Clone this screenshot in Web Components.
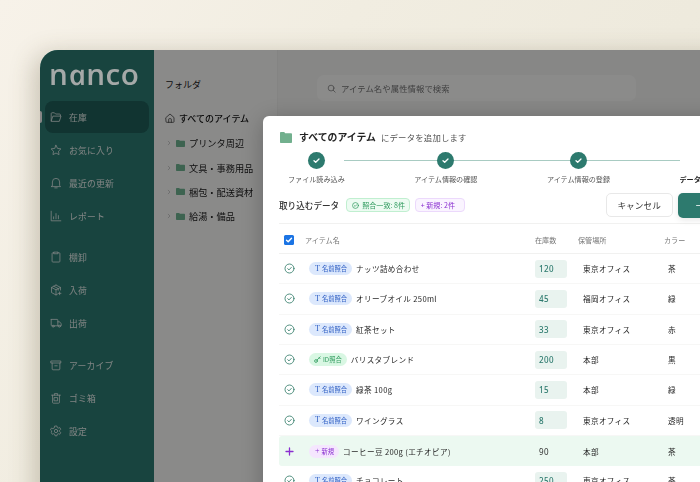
<!DOCTYPE html>
<html lang="ja"><head><meta charset="utf-8"><title>nanco</title>
<style>
html,body{margin:0;height:482px;overflow:hidden}
body{width:700px;background:linear-gradient(125deg,#f7f2e9 0,#f1ede1 35%,#ebe7d9 100%);font-family:"Noto Sans CJK JP","Noto Sans",sans-serif;color:#2b2b2b}
</style></head><body>
<app-window>
  <side-nav slot="nav"></side-nav>
  <folder-panel slot="folders"></folder-panel>
  <search-pane slot="main"></search-pane>
  <import-modal slot="modal"></import-modal>
</app-window>
<script>
const ICONS={
folder:'<path d="M1.500 12V3.200c0-.6.400-1 1-1h3l1.500 1.600h5c.6 0 1 .4 1 1V6M1.500 12.500 3.600 6.400h10.200l-2 6.100z"/>',
star:'<path d="M7.500 1.600l1.900 3.900 4.200.6-3 3 .7 4.200-3.800-2-3.800 2 .7-4.200-3-3 4.200-.6z"/>',
bell:'<path d="M3 10.500V6.200a4.500 4.500 0 019 0v4.300l1.200 1.500H1.800zM6 13.600h3"/>',
chart:'<path d="M1.500 1.500v12h12M4.500 11V8.500M7.500 11V4.500M10.500 11V7"/>',
clip:'<path d="M5 2.200H3.600c-.6 0-1 .4-1 1v9.600c0 .6.400 1 1 1h7.800c.6 0 1-.4 1-1V3.200c0-.6-.4-1-1-1H10M5 1.400h5v2H5z"/>',
box:'<path d="M7.500 1.300l5.600 3v3.200M7.500 1.300 1.900 4.300v6.400l5.600 3 1.800-1M1.900 4.300l5.600 3 5.600-3M7.500 7.300v6.400M4.700 2.800l5.600 3v2M12 10v3.400M10.300 11.700h3.400"/>',
truck:'<path d="M1.500 3h7.500c.5 0 .8.3.8.800V11H5M3 11H2.300c-.5 0-.8-.3-.8-.8V3M9.800 6h2.200l2 2.500V11h-1M10.500 11H9.800"/><circle cx="4" cy="11.500" r="1.200"/><circle cx="11.700" cy="11.500" r="1.200"/>',
archive:'<path d="M1.500 2.500h12v2.500h-12zM2.700 5v7.500c0 .6.400 1 1 1h7.600c.6 0 1-.4 1-1V5M6 8.500h3"/>',
trash:'<path d="M2 4h11M5.500 4V2h4v2M3.200 4v9c0 .6.400 1 1 1h6.600c.6 0 1-.4 1-1V4M5.500 7h4v4h-4z"/>',
gear:'<circle cx="7.500" cy="7.500" r="2.100"/><path d="M6.300 1.300h2.400l.4 1.900 1.300.7 1.800-.7 1.200 2.100-1.400 1.300v1.600l1.400 1.300-1.200 2.100-1.800-.7-1.300.7-.4 1.900H6.300l-.4-1.900-1.300-.7-1.800.7-1.200-2.100L2 8.900V7.300L.6 6l1.200-2.100 1.800.7 1.300-.7z"/>',
home:'<path d="M1.500 6.800 7.500 1.500l6 5.300V13c0 .6-.4 1-1 1h-10c-.6 0-1-.4-1-1zM5.500 14V9.500c0-.6.400-1 1-1h2c.6 0 1 .4 1 1V14"/>',
search:'<circle cx="6.800" cy="6.800" r="4.800"/><path d="M10.400 10.400l3.200 3.200"/>',
chev:'<path d="M5.500 3l4.500 4.500L5.500 12"/>'
};
const ico=(n,s=15,c='currentColor',w=1.1)=>`<svg width="${s}" height="${s}" viewBox="0 0 15 15" fill="none" stroke="${c}" stroke-width="${w}" stroke-linecap="round" stroke-linejoin="round" style="display:block;flex:none">${ICONS[n]}</svg>`;
const FOLDER=(s,h,c)=>`<svg width="${s}" height="${h}" viewBox="0 0 12 10" preserveAspectRatio="none" style="display:block;flex:none"><path fill="${c}" d="M0 1c0-.5.4-1 1-1h3.200l1 1.200H11c.6 0 1 .4 1 1V9c0 .6-.4 1-1 1H1c-.6 0-1-.4-1-1z"/></svg>`;
function def(name,css,html){
  customElements.define(name,class extends HTMLElement{
    connectedCallback(){
      if(this.shadowRoot)return;
      const r=this.attachShadow({mode:'open'});
      r.innerHTML=`<style>${css}</style>`+(typeof html==='function'?html(this):html);
    }
  });
}
def('app-window',`
:host{display:block;position:absolute;left:40px;top:50px;width:760px;height:560px;border-radius:18px 0 0 0;overflow:hidden;background:#f8f8f7;box-shadow:-6px 4px 24px rgba(90,80,50,.28);filter:blur(.3px)}
.cols{display:flex;height:100%}
.veil{position:absolute;inset:0;background:rgba(0,0,0,.45)}
`,`<div class="cols"><slot name="nav"></slot><slot name="folders"></slot><slot name="main"></slot></div><div class="veil"></div><slot name="modal"></slot>`);

def('nav-item',`
:host{display:block;height:32px;width:104px;margin:0 0 1px 5px;position:relative}
.r{display:flex;align-items:center;gap:7px;height:100%;padding-left:5px;font-size:8.800px;letter-spacing:.2px;border-radius:8px;color:#e8efed}
:host([active]) .r{background:#1f5f59}
:host([active]) .bar{position:absolute;left:-5px;top:10px;width:2px;height:12px;background:#f5f5f5;border-radius:0 2px 2px 0}
`,h=>`<div class="bar"></div><div class="r">${ico(h.getAttribute('icon'),12,'#e6efed',1)}<slot></slot></div>`);

def('side-nav',`
:host{display:block;width:114px;flex:none;height:100%;background:#2d7d74;padding-top:7px;box-sizing:border-box}
.logo{height:44px;padding-left:9px;font:600 28px/35px "Open Sans",sans-serif;letter-spacing:.5px;color:#a5a9a8;white-space:nowrap;position:relative;z-index:1;transform:scaleX(1.06);transform-origin:9px 0}
.logo span{display:inline-block;font-style:italic;transform:skewX(12deg)}
.g1{margin-bottom:9px}.g2{margin-bottom:10px}
`,`<div class="logo">n<span>a</span>nco</div>
<div class="g1"><nav-item icon="folder" active>在庫</nav-item><nav-item icon="star">お気に入り</nav-item><nav-item icon="bell">最近の更新</nav-item><nav-item icon="chart">レポート</nav-item></div>
<div class="g2"><nav-item icon="clip">棚卸</nav-item><nav-item icon="box">入荷</nav-item><nav-item icon="truck">出荷</nav-item></div>
<div><nav-item icon="archive">アーカイブ</nav-item><nav-item icon="trash">ゴミ箱</nav-item><nav-item icon="gear">設定</nav-item></div>`);

def('tree-row',`
:host{display:flex;align-items:center;height:24.400px;padding-left:12px;font-size:9.200px;gap:4px;color:#1b1b1b;white-space:nowrap}
`,()=>`${ico('chev',6,'#9a9a9a',1.2)}${FOLDER(9,7,'#70b592')}<slot></slot>`);

def('folder-panel',`
:host{display:block;width:123px;flex:none;height:100%;background:#fbfbfa;border-right:1px solid #f0f0ee}
h2{margin:0;font-size:9px;font-weight:400;padding:28px 0 0 11px;line-height:14px;color:#222}
.all{display:flex;align-items:center;gap:4px;height:24px;margin:14px 0 1px 11px;font-size:9px;font-weight:500;color:#111;white-space:nowrap}
`,`<h2>フォルダ</h2><div class="all">${ico('home',10,'#333',1.1)}すべてのアイテム</div>
<tree-row>プリンタ周辺</tree-row><tree-row>文具・事務用品</tree-row><tree-row>梱包・配送資材</tree-row><tree-row>給湯・備品</tree-row>`);

def('search-pane',`
:host{display:block;flex:1;height:100%;background:#f6f6f4;padding:25px 0 0 39px;box-sizing:border-box}
.s{width:319px;height:26px;box-sizing:border-box;border-radius:7px;background:#fdfdfc;display:flex;align-items:center;gap:5px;padding-left:10px;font-size:8.400px;letter-spacing:.05px;color:#777}
`,`<div class="s">${ico('search',9,'#777',1.2)}アイテム名や属性情報で検索</div>`);

def('match-badge',`
:host{display:inline-flex;align-items:center;gap:2px;height:13px;border-radius:7px;padding:0 5px 0 6px;font-size:6.300px;letter-spacing:0;white-space:nowrap;background:#dce8fc;color:#2f5fc4;flex:none}
:host([kind=id]){background:#d9f7e3;color:#2e9a5d;padding:0 5px}
:host([kind=new]){background:#f5e6fe;color:#8a2fd0;padding:0 5px 0 6px}
::slotted(i){font-style:normal;font-size:8px;font-family:"Liberation Serif",serif;line-height:1}
`,`<slot></slot>`);

const COLS='26px 230px 43px 86px 60px';
def('data-row',`
:host{display:grid;grid-template-columns:${COLS};height:30.330px;align-items:center;font-size:7.600px;color:#262626;border-bottom:1px solid #f7f7f6;box-sizing:border-box;letter-spacing:.35px}
:host([new]){background:#ecf9f1;border-radius:3px 0 0 3px;border-bottom:0}
.i{display:flex;justify-content:center;padding-right:6px}
.n{display:flex;align-items:center;gap:4px;padding-left:4px;white-space:nowrap}
.q{width:32px;height:18px;background:#e9f3ef;border-radius:3px;display:flex;align-items:center;padding-left:4px;box-sizing:border-box;color:#2d7a6e;font-size:8px;font-weight:500;font-family:"Noto Sans",sans-serif;letter-spacing:.4px}
:host([new]) .q{background:none;color:#333;font-weight:400}
.l{padding-left:5px}.k{padding-left:4px}
`,h=>{
 const a=k=>h.getAttribute(k),isNew=h.hasAttribute('new'),kind=a('kind');
 const icon=isNew?`<svg width="9" height="9" viewBox="0 0 9 9" stroke="#8a2fd0" stroke-width="1.300" stroke-linecap="round"><path d="M4.500 1v7M1 4.500h7"/></svg>`
 :`<svg width="11" height="11" viewBox="0 0 11 11" fill="none" stroke="#3f8573" stroke-width=".9" stroke-linecap="round" stroke-linejoin="round"><circle cx="5.500" cy="5.500" r="4.500"/><path d="M3.700 5.700l1.300 1.200 2.300-2.500"/></svg>`;
 const key=`<svg width="7" height="7" viewBox="0 0 7 7" fill="none" stroke="#2e9a5d" stroke-width=".8" stroke-linecap="round"><circle cx="2" cy="5" r="1.400"/><path d="M3 4l3.200-3.200M5.200 1.800l.9.900"/></svg>`;
 const lab=isNew?'<i>+</i>新規':kind==='id'?key+'ID照合':'<i>T</i>名前照合';
 return `<div class="i">${icon}</div><div class="n"><match-badge kind="${isNew?'new':kind||'name'}">${lab}</match-badge><span>${a('name')}</span></div><div><div class="q">${a('qty')}</div></div><div class="l">${a('loc')}</div><div class="k">${a('col')}</div>`;
});

def('step-item',`
:host{display:flex;flex-direction:column;align-items:center;gap:5px;position:relative;z-index:1;flex:none}
.c{width:17px;height:17px;border-radius:50%;background:#2d7a6e;display:flex;align-items:center;justify-content:center}
:host([cur]) .c{background:#fff;border:1.500px solid #cfe0db;box-sizing:border-box}
.t{font-size:7.100px;line-height:10px;color:#555;white-space:nowrap}
:host([cur]) .t{font-weight:700;color:#222;min-width:57px}
`,h=>`<div class="c">${h.hasAttribute('cur')?'':'<svg width="9" height="9" viewBox="0 0 9 9" fill="none" stroke="#fff" stroke-width="1.300" stroke-linecap="round" stroke-linejoin="round"><path d="M2 4.700l1.700 1.600L7 3"/></svg>'}</div><div class="t"><slot></slot></div>`);

def('import-modal',`
:host{display:block;position:absolute;left:223px;top:66px;width:520px;height:480px;background:#fff;border-radius:6px;box-sizing:border-box;padding:15px 0 0 16px;box-shadow:0 4px 24px rgba(0,0,0,.25);overflow:hidden}
.title{display:flex;align-items:center;gap:7px;height:12px;margin-left:1px}
.title b{font-size:9.900px;font-weight:700;color:#222;white-space:nowrap}
.title span{font-size:8.400px;color:#555;letter-spacing:.2px;white-space:nowrap;margin-left:-2px}
.steps{display:flex;gap:69.500px;position:relative;margin:9px 0 0 9px;width:max-content}
.steps::before{content:"";position:absolute;left:56px;top:8px;width:336px;height:1.300px;background:#a8cbc2}
.act{display:flex;align-items:center;height:24px;margin-top:9px}
.act h3{margin:0;font-size:8.600px;font-weight:500;color:#333;white-space:nowrap;flex:none}
.chip{display:flex;align-items:center;gap:3px;height:14px;box-sizing:border-box;border-radius:4px;font-size:7.100px;padding:0 5px;white-space:nowrap;flex:none}
.g{margin-left:7px;width:64px;background:#edfbf2;border:1px solid #c0efd0;color:#2e9a5d}
.p{margin-left:4.500px;width:50px;background:#faf4ff;border:1px solid #ecd9fc;color:#8a2fd0}
.cancel{margin-left:141px;width:67px;height:24px;flex:none;box-sizing:border-box;border:1px solid #e8e8e8;border-radius:5px;background:#fff;display:flex;align-items:center;justify-content:center;font-size:8.600px;letter-spacing:.1px;color:#333}
.ok{margin-left:5px;width:120px;height:25px;flex:none;border-radius:5px;background:#2d7a6e;color:#fff;font-size:9px;padding-left:18px;box-sizing:border-box;display:flex;align-items:center;box-shadow:0 2px 6px rgba(0,0,0,.1);white-space:nowrap}
.tbl{border-top:1px solid #f1f1f0;margin-top:6px}
.hd{display:grid;grid-template-columns:${COLS};height:30px;padding-top:3px;align-items:center;font-size:7.100px;color:#777;border-bottom:1px solid #f1f1f0;box-sizing:border-box}
.cb{width:10px;height:10px;border-radius:1.500px;background:#1b74e4;margin-left:5px;display:flex;align-items:center;justify-content:center}
`,`<div class="title">${FOLDER(12,11,'#72b08e')}<b>すべてのアイテム</b><span>にデータを追加します</span></div>
<div class="steps"><step-item>ファイル読み込み</step-item><step-item>アイテム情報の確認</step-item><step-item>アイテム情報の登録</step-item><step-item cur>データの取り込み</step-item></div>
<div class="act"><h3>取り込むデータ</h3>
<div class="chip g"><svg width="7" height="7" viewBox="0 0 10 10" fill="none" stroke="currentColor" stroke-width="1" stroke-linecap="round" style="flex:none"><circle cx="5" cy="5" r="4.200"/><path d="M3.300 5.200l1.200 1.100 2.200-2.400"/></svg>照合一致: 8件</div>
<div class="chip p">+ 新規: 2件</div>
<div class="cancel">キャンセル</div><div class="ok">一括取り込み</div></div>
<div class="tbl"><div class="hd"><div><div class="cb"><svg width="8" height="8" viewBox="0 0 8 8" fill="none" stroke="#fff" stroke-width="1.400" stroke-linecap="round" stroke-linejoin="round"><path d="M1.500 4.200l1.700 1.600 3.300-3.600"/></svg></div></div><div>アイテム名</div><div>在庫数</div><div>保管場所</div><div>カラー</div></div>
<data-row name="ナッツ詰め合わせ" qty="120" loc="東京オフィス" col="茶"></data-row>
<data-row name="オリーブオイル 250ml" qty="45" loc="福岡オフィス" col="緑"></data-row>
<data-row name="紅茶セット" qty="33" loc="東京オフィス" col="赤"></data-row>
<data-row kind="id" name="バリスタブレンド" qty="200" loc="本部" col="黒"></data-row>
<data-row name="緑茶 100g" qty="15" loc="本部" col="緑"></data-row>
<data-row name="ワイングラス" qty="8" loc="東京オフィス" col="透明"></data-row>
<data-row new name="コーヒー豆 200g (エチオピア)" qty="90" loc="本部" col="茶"></data-row>
<data-row name="チョコレート" qty="250" loc="東京オフィス" col="茶"></data-row>
</div>`);
</script>
</body></html>
